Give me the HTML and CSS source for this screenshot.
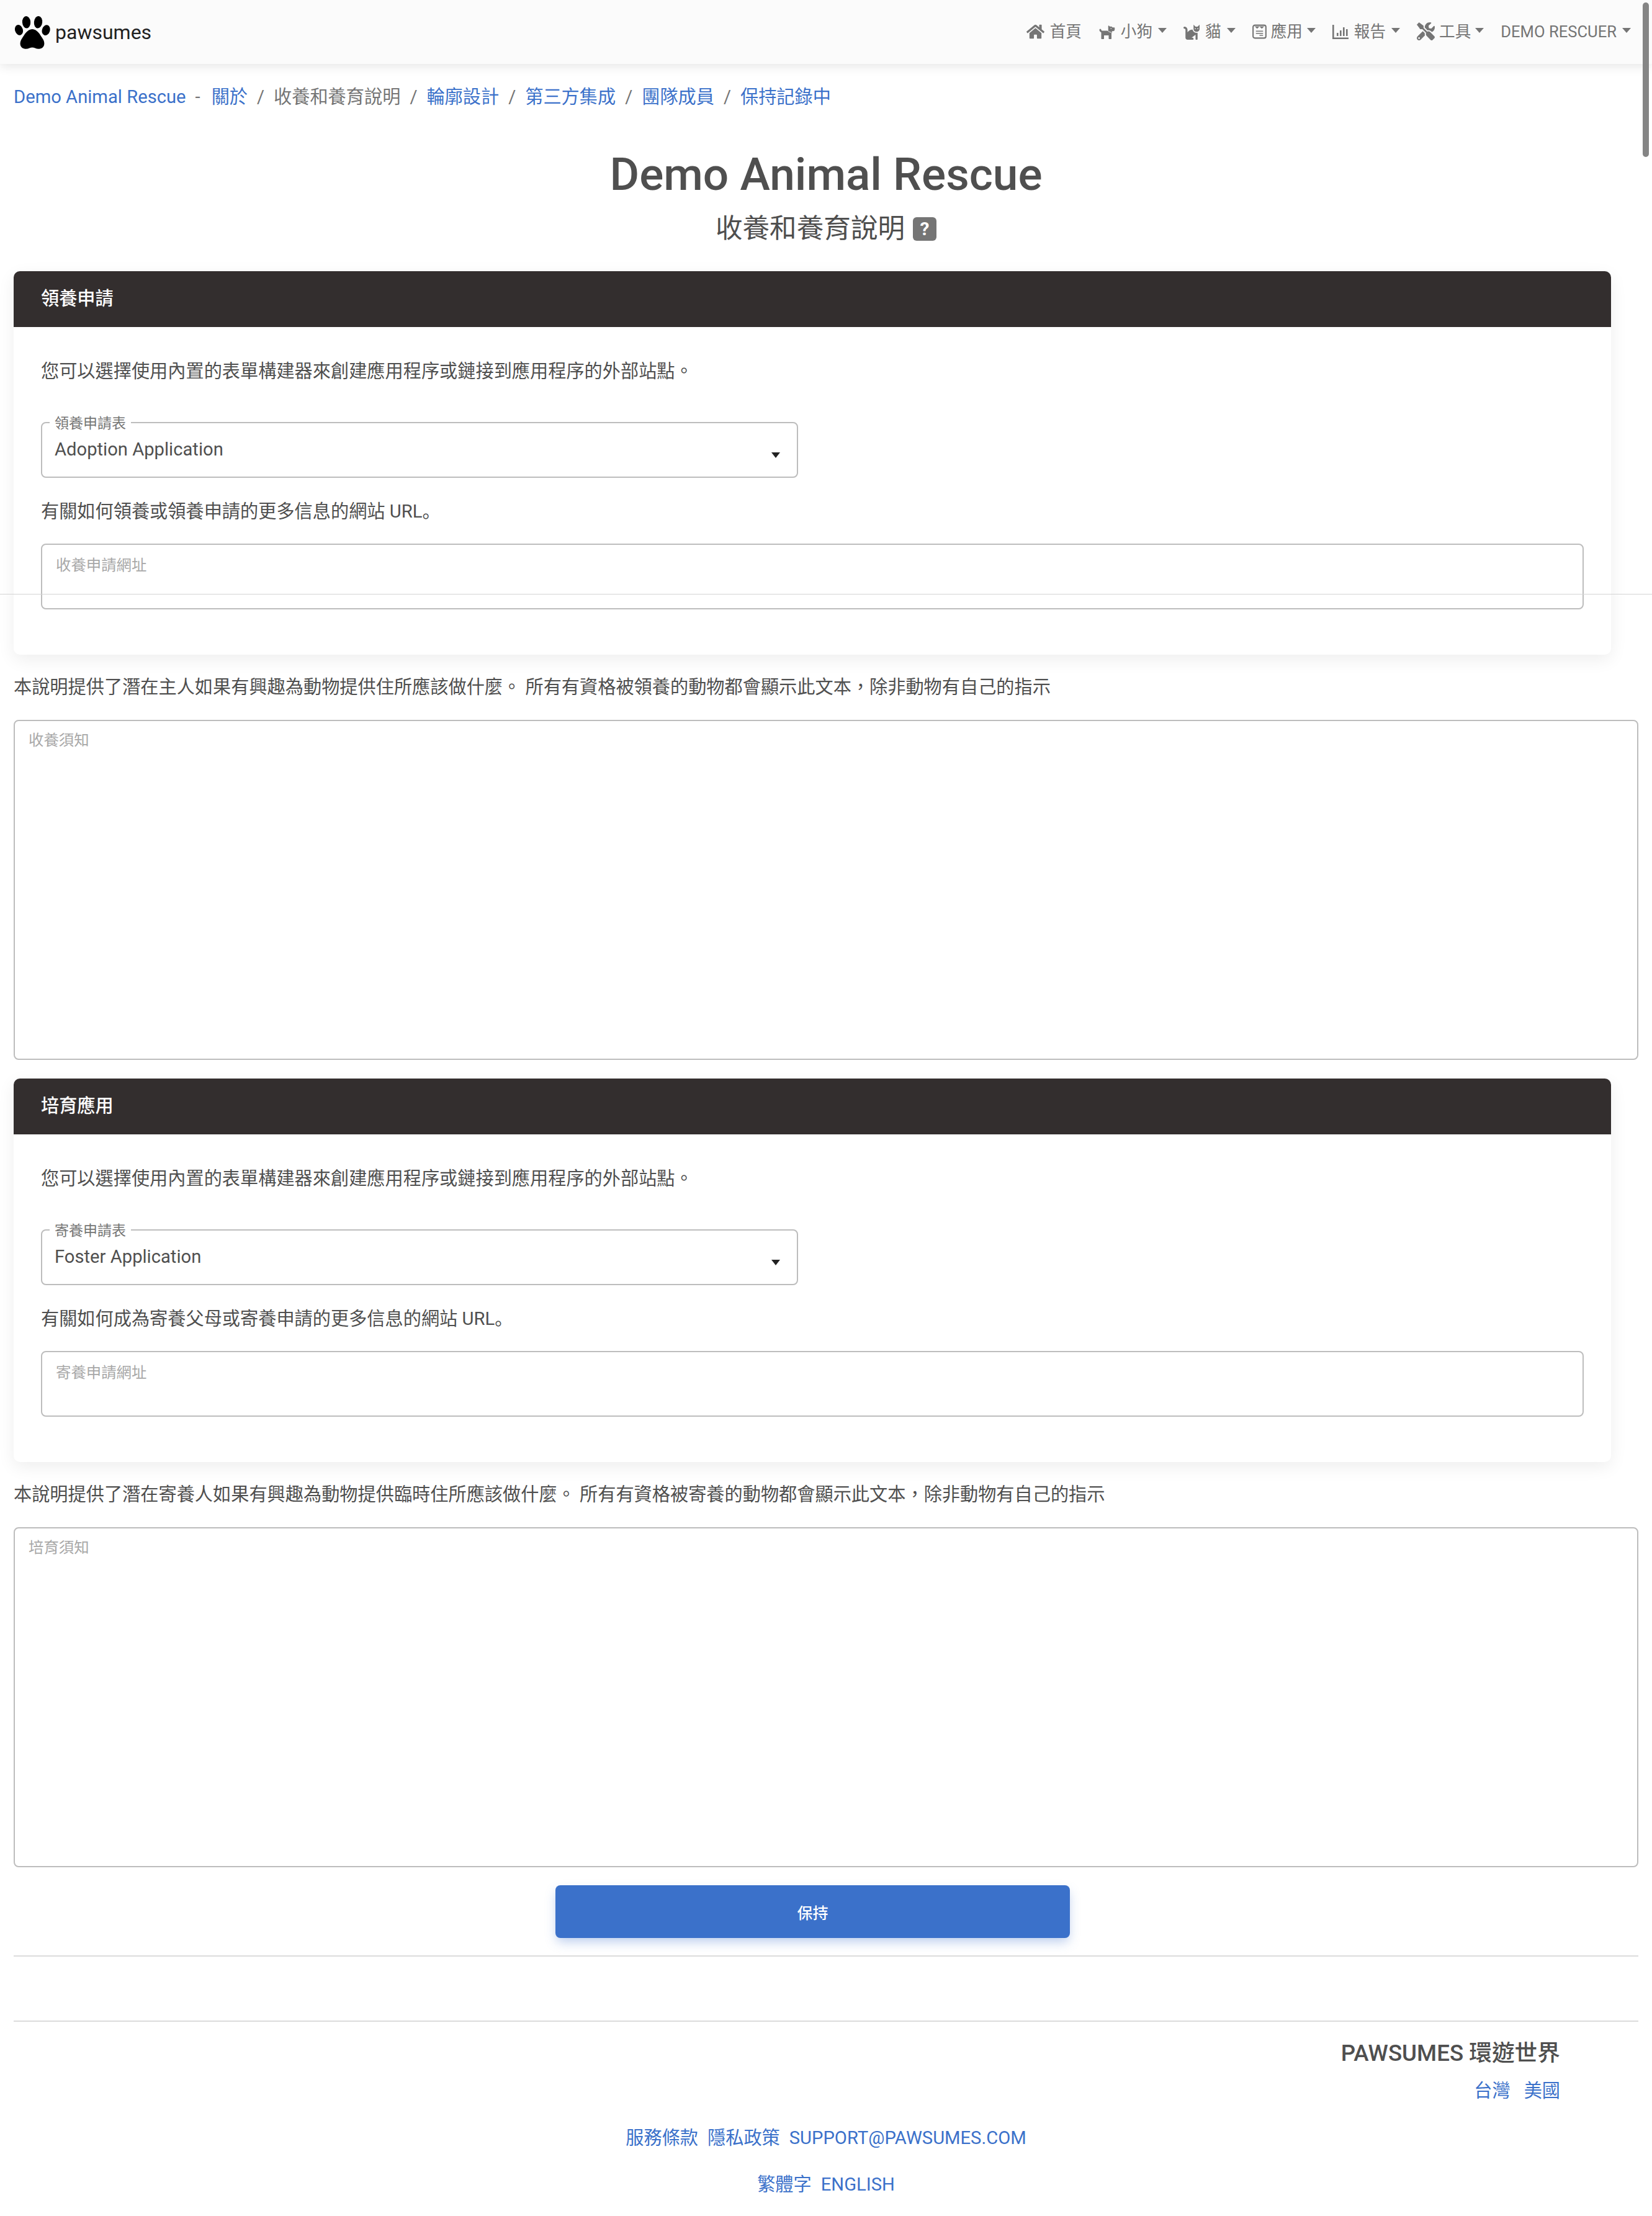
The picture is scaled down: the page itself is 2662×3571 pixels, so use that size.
FILE: index.html
```html
<!DOCTYPE html>
<html lang="zh-Hant">
<head>
<meta charset="utf-8">
<title>收養和養育說明</title>
<link rel="stylesheet" href="styles.css">
</head>
<body>
<header class="navbar">
  <a class="brand" href="#">
    <svg class="paw" viewBox="30 25 190 175"><ellipse cx="95" cy="61" rx="21" ry="31" transform="rotate(-4 95 61)"/><ellipse cx="155" cy="61" rx="21" ry="31" transform="rotate(6 155 61)"/><ellipse cx="57" cy="101" rx="20" ry="27" transform="rotate(-18 57 101)"/><ellipse cx="195" cy="102" rx="20" ry="27" transform="rotate(18 195 102)"/><path d="M125 97C150 97 165 125 178 145C192 165 190 195 160 197C145 198 135 190 125 190C115 190 105 198 90 197C60 195 58 165 72 145C85 125 100 97 125 97Z"/></svg>
    <span>pawsumes</span>
  </a>
  <nav class="menu">
    <a class="item" href="#"><svg class="ic ic-home" viewBox="0 0 576 512"><path d="M280.37 148.26L96 300.11V464a16 16 0 0 0 16 16l112.06-.29a16 16 0 0 0 15.92-16V368a16 16 0 0 1 16-16h64a16 16 0 0 1 16 16v95.64a16 16 0 0 0 16 16.05L464 480a16 16 0 0 0 16-16V300L295.67 148.26a12.19 12.19 0 0 0-15.3 0zM571.6 251.47L488 182.56V44.05a12 12 0 0 0-12-12h-56a12 12 0 0 0-12 12v72.61L318.47 43a48 48 0 0 0-61 0L4.34 251.47a12 12 0 0 0-1.6 16.9l25.5 31A12 12 0 0 0 45.15 301l235.22-193.74a12.19 12.19 0 0 1 15.3 0L530.9 301a12 12 0 0 0 16.9-1.6l25.5-31a12 12 0 0 0-1.7-16.93z"/></svg>首頁</a>
    <a class="item" href="#"><svg class="ic ic-dog" viewBox="0 0 576 512"><path d="M298.06 224L448 277.55V496a16 16 0 0 1-16 16H368a16 16 0 0 1-16-16V384H192V496a16 16 0 0 1-16 16H112a16 16 0 0 1-16-16V282.09C58.84 268.87 32 233.66 32 192a32 32 0 0 1 64 0 32.06 32.06 0 0 0 32 32ZM544 112H480L472.84 97.69A32 32 0 0 0 444.22 80H390.31L363.34 53.06C353.26 43 336 50.12 336 64.37V256l128 45.71V240h32a64 64 0 0 0 64-64V128A16 16 0 0 0 544 112ZM432 160a16 16 0 1 1 16-16A16 16 0 0 1 432 160Z"/></svg>小狗<i class="caret"></i></a>
    <a class="item" href="#"><svg class="ic ic-cat" viewBox="0 0 512 512"><path d="M290.59 192c-20.18 0-106.82 1.98-162.59 85.95V192c0-52.94-43.06-96-96-96-17.67 0-32 14.33-32 32s14.33 32 32 32c17.64 0 32 14.36 32 32v256c0 35.3 28.7 64 64 64h176c8.84 0 16-7.16 16-16v-16c0-17.67-14.33-32-32-32h-32l128-96v144c0 8.84 7.16 16 16 16h32c8.84 0 16-7.16 16-16V289.86c-10.29 2.67-20.89 4.54-32 4.54-61.81 0-113.52-44.05-125.41-102.4zM448 96h-64l-64-64v134.4c0 53.02 42.98 96 96 96s96-42.98 96-96V32l-64 64zm-72 80c-8.84 0-16-7.16-16-16s7.16-16 16-16 16 7.16 16 16-7.16 16-16 16zm80 0c-8.84 0-16-7.16-16-16s7.16-16 16-16 16 7.16 16 16-7.16 16-16 16z"/></svg>貓<i class="caret"></i></a>
    <a class="item item-tight" href="#"><svg class="ic ic-form" viewBox="0 0 24 24"><rect x="1.2" y="1.2" width="21.6" height="21.6" rx="3" fill="none" stroke="currentColor" stroke-width="2.2"/><path d="M4 3l4 4 4-3.5 4 3.5 4-4z"/><path d="M6 10.5h12v1.6H6zM6 14h12v1.6H6zM12 17.5h6v1.6h-6z"/></svg>應用<i class="caret"></i></a>
    <a class="item" href="#"><svg class="ic ic-chart" viewBox="0 0 26 24"><path d="M0 1h2.6v20.4H26V24H0z"/><path d="M7 14h2.6v5H7zM12 10h2.6v9H12zM17 5h2.6v14H17zM22 8h2.6v11H22z"/></svg>報告<i class="caret"></i></a>
    <a class="item item-tight" href="#"><svg class="ic ic-tools" viewBox="0 0 512 512"><path d="M501.1 395.7L384 278.6c-23.1-23.1-57.6-27.6-85.4-13.9L192 158.1V96L64 0 0 64l96 128h62.1l106.6 106.6c-13.6 27.8-9.2 62.3 13.9 85.4l117.1 117.1c14.6 14.6 38.2 14.6 52.7 0l52.7-52.7c14.5-14.6 14.5-38.2-.1-52.7zM331.7 225c28.3 0 54.9 11 74.9 31l19.4 19.4c15.8-6.9 30.8-16.5 43.8-29.5 37.1-37.1 49.7-89.3 37.9-136.7-2.2-9-13.5-12.1-20.1-5.5l-74.4 74.4-67.9-11.3L334 98.9l74.4-74.4c6.6-6.6 3.4-17.9-5.7-20.2-47.4-11.7-99.6.9-136.6 37.9-28.5 28.5-41.9 66.1-41.2 103.6l82.1 82.1c8.1-1.9 16.5-2.9 24.7-2.9zm-103.9 82l-56.7-56.7L18.7 402.8c-25 25-25 65.5 0 90.5s65.5 25 90.5 0l123.6-123.6c-7.6-19.9-9.9-41.6-5-62.7zM64 472c-13.2 0-24-10.8-24-24 0-13.3 10.7-24 24-24s24 10.7 24 24c0 13.2-10.7 24-24 24z"/></svg>工具<i class="caret"></i></a>
    <a class="item" href="#">DEMO RESCUER<i class="caret"></i></a>
  </nav>
</header>

<main class="page">
  <div class="crumbs">
    <a href="#">Demo Animal Rescue</a><span class="dash">-</span>
    <a href="#">關於</a><span class="sep">/</span>
    <span>收養和養育說明</span><span class="sep">/</span>
    <a href="#">輪廓設計</a><span class="sep">/</span>
    <a href="#">第三方集成</a><span class="sep">/</span>
    <a href="#">團隊成員</a><span class="sep">/</span>
    <a href="#">保持記錄中</a>
  </div>

  <h1 class="title">Demo Animal Rescue</h1>
  <h2 class="subtitle">收養和養育說明<span class="help">?</span></h2>

  <section class="card">
    <div class="card-head">領養申請</div>
    <div class="card-body">
      <p class="lead">您可以選擇使用內置的表單構建器來創建應用程序或鏈接到應用程序的外部站點<span class="punct">。</span></p>
      <div class="picker">
        <label class="picker-label">領養申請表</label>
        <select class="picker-select"><option>Adoption Application</option></select>
        <i class="picker-caret"></i>
      </div>
      <p class="hint">有關如何領養或領養申請的更多信息的網站 URL<span class="punct">。</span></p>
      <input class="url" type="text" placeholder="收養申請網址">
    </div>
  </section>
  <p class="note">本說明提供了潛在主人如果有興趣為動物提供住所應該做什麼<span class="punct">。</span> 所有有資格被領養的動物都會顯示此文本<span class="punct">，</span>除非動物有自己的指示</p>
  <textarea class="notes" placeholder="收養須知"></textarea>

  <section class="card">
    <div class="card-head">培育應用</div>
    <div class="card-body">
      <p class="lead">您可以選擇使用內置的表單構建器來創建應用程序或鏈接到應用程序的外部站點<span class="punct">。</span></p>
      <div class="picker">
        <label class="picker-label">寄養申請表</label>
        <select class="picker-select"><option>Foster Application</option></select>
        <i class="picker-caret"></i>
      </div>
      <p class="hint">有關如何成為寄養父母或寄養申請的更多信息的網站 URL<span class="punct">。</span></p>
      <input class="url" type="text" placeholder="寄養申請網址">
    </div>
  </section>
  <p class="note">本說明提供了潛在寄養人如果有興趣為動物提供臨時住所應該做什麼<span class="punct">。</span> 所有有資格被寄養的動物都會顯示此文本<span class="punct">，</span>除非動物有自己的指示</p>
  <textarea class="notes" placeholder="培育須知"></textarea>

  <button class="save" type="button">保持</button>
  <hr class="rule rule-first">
  <hr class="rule rule-second">

  <footer class="foot">
    <div class="foot-world">
      <div class="foot-title">PAWSUMES 環遊世界</div>
      <div class="foot-regions"><a href="#">台灣</a><a href="#">美國</a></div>
    </div>
    <div class="foot-links"><a href="#">服務條款</a><a href="#">隱私政策</a><a href="#">SUPPORT@PAWSUMES.COM</a></div>
    <div class="foot-links foot-lang"><a href="#">繁體字</a><a href="#">ENGLISH</a></div>
  </footer>
</main>

<div class="hairline"></div>
<div class="scrollthumb"></div>
</body>
</html>
```

FILE: styles.css
```css
* { box-sizing: border-box; }
html, body { margin: 0; padding: 0; }
body {
  position: relative;
  background: #fff;
  color: #4f4f4f;
  font-family: Roboto, "Noto Sans CJK TC", sans-serif;
  font-size: 29.2px;
  line-height: 43px;
  overflow: hidden;
}
a { color: #3b71ca; text-decoration: none; }
.punct { font-family: "Noto Sans CJK JP", sans-serif; }

.navbar {
  height: 103px;
  background: #fbfbfb;
  box-shadow: 0 4px 16px rgba(0, 0, 0, .1);
  display: flex;
  align-items: center;
  justify-content: space-between;
  padding: 0 20px 0 22px;
  position: relative;
}
.brand { display: flex; align-items: center; gap: 7px; color: #212121; font-size: 32px; line-height: 50px; }
.paw { width: 60px; height: 56px; fill: #000; }
.menu { display: flex; align-items: center; margin-top: -2px; }
.item {
  display: flex;
  align-items: center;
  gap: 9px;
  padding: 0 14px 0 13px;
  color: #757575;
  font-size: 25.6px;
  line-height: 40px;
  white-space: nowrap;
}
.item-tight { gap: 7px; }
.ic { fill: currentColor; height: 26px; flex: none; }
.ic-home { width: 29px; }
.ic-dog { width: 27px; }
.ic-cat { width: 26px; }
.ic-form { width: 23px; height: 24px; }
.ic-chart { width: 26px; height: 24px; }
.ic-tools { width: 29px; height: 29px; }
.caret {
  width: 0; height: 0;
  border-left: 7px solid transparent;
  border-right: 7px solid transparent;
  border-top: 8px solid currentColor;
  margin-top: -3px;
}

.page { padding: 0 22px; }
.crumbs { display: flex; align-items: center; padding-top: 32px; height: 75px; color: #757575; }
.sep { margin: 0 15px; }
.dash { margin: 0 18px 0 15px; }

.title { margin: 58px 0 0; text-align: center; font-size: 73px; line-height: 90px; font-weight: 500; color: #4f4f4f; }
.subtitle { margin: 12px 0 0; height: 62px; display: flex; align-items: center; justify-content: center; gap: 13px; font-size: 43.6px; line-height: 62px; font-weight: 400; color: #4f4f4f; }
.help {
  width: 38px; height: 38px;
  margin-top: 0;
  border-radius: 6px;
  background: #757575;
  color: #fff;
  font-size: 30px;
  line-height: 38px;
  font-weight: 700;
  text-align: center;
}

.card {
  width: 2574px;
  margin-top: 30px;
  border-radius: 10px;
  background: #fff;
  box-shadow: 0 8px 28px rgba(0, 0, 0, .07);
}
.subtitle + .card { margin-top: 37px; }
.card-head {
  height: 90px;
  padding: 0 44px;
  border-radius: 10px 10px 0 0;
  background: #332e2e;
  color: #fff;
  font-weight: 500;
  line-height: 88px;
}
.card-body { padding: 47px 44px 73px; }
.lead, .hint, .note { margin: 0; }
.picker { position: relative; width: 1220px; margin-top: 60px; }
.picker-label {
  position: absolute;
  left: 14px;
  top: -10px;
  padding: 0 8px;
  background: #fff;
  color: #757575;
  font-size: 23px;
  line-height: 26px;
}
.picker-select {
  display: block;
  width: 100%;
  height: 90px;
  padding: 0 20px 2px;
  border: 2px solid #bdbdbd;
  border-radius: 8px;
  background: #fff;
  color: #4f4f4f;
  font: inherit;
  appearance: none;
}
.picker-caret {
  position: absolute;
  right: 29px;
  top: 49px;
  width: 0; height: 0;
  border-left: 7px solid transparent;
  border-right: 7px solid transparent;
  border-top: 9px solid #222;
}
.hint { margin-top: 30px; }
.url, .notes {
  display: block;
  border: 2px solid #bdbdbd;
  border-radius: 8px;
  background: #fff;
  color: #4f4f4f;
  font-family: inherit;
  font-size: 24.4px;
  outline: none;
}
.url { width: 100%; height: 106px; margin-top: 30px; padding: 0 22px 38px; }
.note { margin-top: 28px; }
.notes { width: 100%; height: 548px; margin-top: 31px; padding: 16px 22px; line-height: 30px; resize: none; }
::placeholder { color: #a8a8a8; opacity: 1; }

.save {
  display: block;
  width: 829px;
  height: 85px;
  margin: 29px 0 0 873px;
  border: 0;
  border-radius: 8px;
  background: #3b71ca;
  color: #fff;
  font-family: inherit;
  font-size: 25px;
  font-weight: 500;
  box-shadow: 0 8px 18px -2px rgba(59, 113, 202, .35);
}
.rule { height: 2px; margin: 0; border: 0; background: #dcdcdc; }
.rule-first { margin-top: 28px; }
.rule-second { margin-top: 103px; }

.foot-world { padding-right: 126px; text-align: right; }
.foot-title { margin-top: 29px; font-size: 36.7px; line-height: 44px; font-weight: 500; color: #4f4f4f; }
.foot-regions { display: flex; justify-content: flex-end; gap: 22px; margin-top: 17px; }
.foot-links { display: flex; justify-content: center; gap: 15px; margin-top: 33px; }
.foot-lang { margin-top: 32px; }

.hairline { position: absolute; left: 0; right: 0; top: 957px; height: 1px; background: #d4d4d4; }
.scrollthumb { position: absolute; left: 2647px; top: 4px; width: 10px; height: 249px; border-radius: 5px; background: #858585; }
```
